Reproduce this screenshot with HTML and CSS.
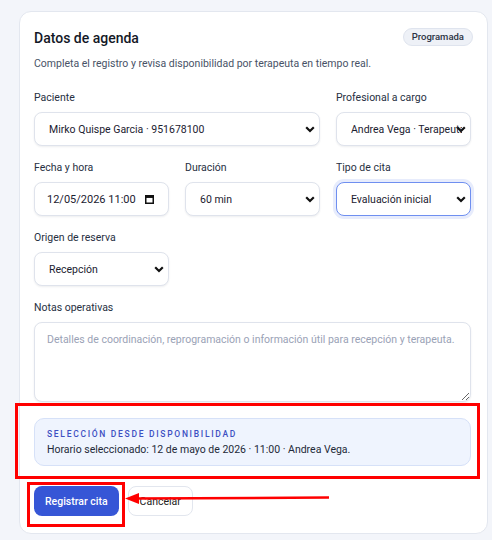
FILE: index.html
```html
<!DOCTYPE html>
<html lang="es">
<head>
  <meta charset="UTF-8" />
  <meta name="viewport" content="width=device-width, initial-scale=1.0"/>
  <title>Datos de agenda</title>
  <link rel="stylesheet" href="styles.css">
</head>
<body>
  <form class="card" id="agenda-form">
    <div class="card-head">
      <h2>Datos de agenda</h2>
      <span class="badge">Programada</span>
    </div>
    <p class="subtitle">Completa el registro y revisa disponibilidad por terapeuta en tiempo real.</p>

    <div class="grid">
      <div class="field span-2">
        <label for="paciente">Paciente</label>
        <select id="paciente">
          <option>Mirko Quispe Garcia · 951678100</option>
        </select>
      </div>
      <div class="field">
        <label for="profesional">Profesional a cargo</label>
        <select id="profesional">
          <option>Andrea Vega · Terapeuta física</option>
        </select>
      </div>

      <div class="field">
        <label>Fecha y hora</label>
        <div class="fake-input">
          <span>12/05/2026 11:00</span>
          <svg class="cal" width="9" height="9" viewBox="0 0 9 9">
            <rect x="0.75" y="0.75" width="7.5" height="7.5" fill="none" stroke="#111" stroke-width="1.5"/>
            <rect x="0.75" y="0.75" width="7.5" height="2.2" fill="#111"/>
          </svg>
        </div>
      </div>
      <div class="field">
        <label for="duracion">Duración</label>
        <select id="duracion">
          <option>60 min</option>
        </select>
      </div>
      <div class="field">
        <label for="tipo">Tipo de cita</label>
        <select id="tipo" class="focused">
          <option>Evaluación inicial</option>
        </select>
      </div>

      <div class="field">
        <label for="origen">Origen de reserva</label>
        <select id="origen">
          <option>Recepción</option>
        </select>
      </div>
    </div>

    <div class="field notes">
      <label for="notas">Notas operativas</label>
      <textarea id="notas" placeholder="Detalles de coordinación, reprogramación o información útil para recepción y terapeuta."></textarea>
    </div>

    <div class="selection">
      <div class="selection-title">Selección desde disponibilidad</div>
      <div class="selection-text">Horario seleccionado: 12 de mayo de 2026 · 11:00 · Andrea Vega.</div>
    </div>

    <div class="actions">
      <button type="submit" class="btn-primary">Registrar cita</button>
      <button type="button" class="btn-ghost">Cancelar</button>
    </div>
  </form>

  <!-- review marks drawn on top of the form -->
  <svg class="marks" width="492" height="540" viewBox="0 0 492 540">
    <rect x="16.5" y="404.5" width="462" height="73" fill="none" stroke="#f00" stroke-width="3"/>
    <rect x="28.5" y="483.5" width="95" height="42" fill="none" stroke="#f00" stroke-width="3"/>
    <line x1="135" y1="498.5" x2="329" y2="497.5" stroke="#f00" stroke-width="2.5"/>
    <polygon points="125,498.5 139,493 139,504" fill="#f00"/>
  </svg>
</body>
</html>
```

FILE: styles.css
```css
html, body {
  margin: 0;
}
body {
  position: relative;
  width: 492px;
  height: 540px;
  overflow: hidden;
  background: #f3f5fa;
  font-family: Roboto, "Noto Sans", sans-serif;
  color: #1f2533;
  padding: 11px 4px 0 19px;
  box-sizing: border-box;
}
.card {
  background: #fff;
  border: 1px solid #e3e7ef;
  border-radius: 12px;
  padding: 16px 16px 17px 14px;
  box-sizing: border-box;
}
.card-head {
  display: flex;
  justify-content: space-between;
  align-items: center;
}
.card-head h2 {
  margin: 0;
  font-size: 14px;
  font-weight: 500;
  line-height: 20px;
  color: #131826;
}
.badge {
  font-size: 9.5px;
  font-weight: 500;
  line-height: 14px;
  padding: 1px 8px;
  border: 1px solid #dfe4ee;
  background: #eef1f7;
  border-radius: 9px;
  color: #2c3344;
  margin: -2px -2px 0 0;
}
.subtitle {
  margin: 8px 0 18px;
  font-size: 10.5px;
  line-height: 16px;
  color: #485266;
}
.grid {
  display: grid;
  grid-template-columns: repeat(3, 1fr);
  column-gap: 16px;
  row-gap: 14px;
}
.span-2 {
  grid-column: span 2;
}
.field label {
  display: block;
  font-size: 10.5px;
  line-height: 16px;
  margin-bottom: 6px;
  color: #273042;
}
select, .fake-input, textarea {
  display: block;
  width: 100%;
  height: 34px;
  box-sizing: border-box;
  border: 1px solid #dfe3ec;
  border-radius: 8px;
  background: #fff;
  box-shadow: 0 1px 2px rgba(30, 40, 70, 0.08);
  font-family: inherit;
  font-size: 10.5px;
  color: #1b2130;
  margin: 0;
}
select {
  appearance: none;
  -webkit-appearance: none;
  padding: 0 8px 0 14px;
  background-image: url("data:image/svg+xml;utf8,<svg xmlns='http://www.w3.org/2000/svg' width='10' height='7' viewBox='0 0 10 7'><path d='M1.2 1.3 L5 5 L8.8 1.3' fill='none' stroke='%23111' stroke-width='2.2'/></svg>");
  background-repeat: no-repeat;
  background-position: right 4px center;
  background-size: 10px 7px;
}
select.focused {
  border-color: #6f8ff0;
  box-shadow: 0 0 0 3px #e7ecfc;
}
.fake-input {
  display: flex;
  align-items: center;
  justify-content: space-between;
  padding: 0 14px 0 12px;
  font-size: 11px;
}
.notes {
  margin-top: 14px;
}
textarea {
  height: 80px;
  padding: 9px 12px;
  resize: vertical;
  line-height: 16px;
}
textarea::placeholder {
  color: #9aa2b6;
}
.selection {
  margin-top: 16px;
  background: #eff4fe;
  border: 1px solid #d6e1f8;
  border-radius: 10px;
  padding: 8px 12px 7px;
}
.selection-title {
  font-size: 8.5px;
  font-weight: 500;
  letter-spacing: 1.7px;
  text-transform: uppercase;
  color: #3d4fc2;
  line-height: 14px;
}
.selection-text {
  font-size: 10.5px;
  line-height: 17px;
  color: #232a39;
}
.actions {
  display: flex;
  gap: 9px;
  margin-top: 20px;
}
.actions button {
  height: 30px;
  border-radius: 8px;
  font-family: inherit;
  font-size: 10.5px;
  padding: 0 11px;
}
.btn-primary {
  background: #3656d6;
  color: #fff;
  border: none;
  font-weight: 500;
}
.btn-ghost {
  background: #fff;
  color: #222;
  border: 1px solid #e2e6ee;
  padding: 0 13px;
}
.marks {
  position: absolute;
  left: 0;
  top: 0;
  pointer-events: none;
}
```
